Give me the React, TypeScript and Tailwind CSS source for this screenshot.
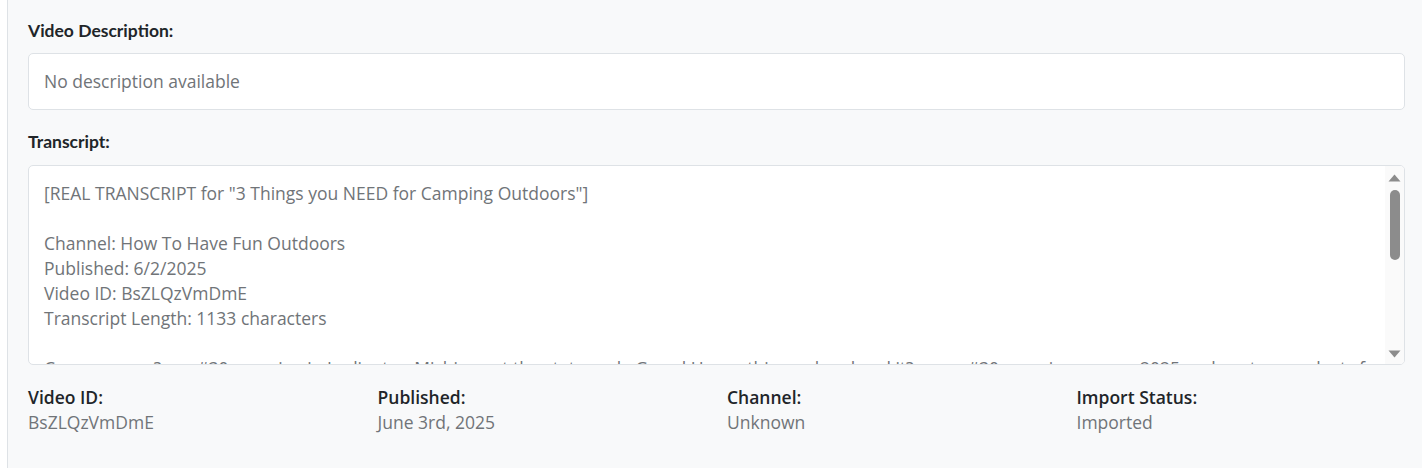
import React from "react";

const lines = [
  '[REAL TRANSCRIPT for "3 Things you NEED for Camping Outdoors"]',
  "",
  "Channel: How To Have Fun Outdoors",
  "Published: 6/2/2025",
  "Video ID: BsZLQzVmDmE",
  "Transcript Length: 1133 characters",
  "",
  "Camp season? yes #30 camping in Ludington Michigan at the state park. Grand Haven this weekend and it? camp #30 camping season 2025 and my top products for camping",
];

function Scrollbar() {
  return (
    <div className="w-[19px] shrink-0 bg-[#fafafa] flex flex-col items-center pt-[8px] pb-[6px]">
      <svg width="13" height="8" viewBox="0 0 13 8" className="shrink-0">
        <polygon points="6.5,0.5 12.5,7.5 0.5,7.5" fill="#8c8c8c" />
      </svg>
      <div className="mt-[8px] w-[10px] h-[70px] rounded-full bg-[#8c8c8c]" />
      <div className="flex-1" />
      <svg width="13" height="8" viewBox="0 0 13 8" className="shrink-0">
        <polygon points="0.5,0.5 12.5,0.5 6.5,7.5" fill="#8c8c8c" />
      </svg>
    </div>
  );
}

export default function App() {
  const meta = [
    { label: "Video ID:", value: "BsZLQzVmDmE" },
    { label: "Published:", value: "June 3rd, 2025" },
    { label: "Channel:", value: "Unknown" },
    { label: "Import Status:", value: "Imported" },
  ];
  return (
    <div className="w-[1422px] h-[468px] bg-white pl-[7px] overflow-hidden">
      <div
        className="h-full bg-[#f8f9fa] border-l border-[#dee2e6] pl-[20px] pr-[17px] pt-[20px]"
        style={{ fontFamily: '"Open Sans", sans-serif' }}
      >
        <div
          className="text-[17.5px] leading-[22px] font-bold text-[#212529]"
          style={{ fontFamily: "Lato, sans-serif" }}
        >
          Video Description:
        </div>
        <div className="mt-[11px] h-[57px] bg-white border border-[#dee2e6] rounded-[5px] px-[15px] flex items-center text-[17.5px] text-[#707478]">
          No description available
        </div>
        <div
          className="mt-[21px] text-[17.5px] leading-[22px] font-bold text-[#212529]"
          style={{ fontFamily: "Lato, sans-serif" }}
        >
          Transcript:
        </div>
        <div className="mt-[12px] h-[200px] bg-white border border-[#dee2e6] rounded-[5px] flex overflow-hidden">
          <div className="flex-1 overflow-hidden pl-[15px] pr-[12px] pt-[15px] text-[17.5px] leading-[25px] text-[#707478]">
            {lines.map((l, i) => (
              <div key={i} className="whitespace-nowrap h-[25px]">
                {l}
              </div>
            ))}
          </div>
          <Scrollbar />
        </div>
        <div className="mt-[20px] grid grid-cols-4 gap-x-[21px]">
          {meta.map((m) => (
            <div key={m.label}>
              <div className="text-[17.5px] leading-[25px] font-semibold text-[#212529]">
                {m.label}
              </div>
              <div className="text-[17.5px] leading-[25px] text-[#707478]">
                {m.value}
              </div>
            </div>
          ))}
        </div>
      </div>
    </div>
  );
}
